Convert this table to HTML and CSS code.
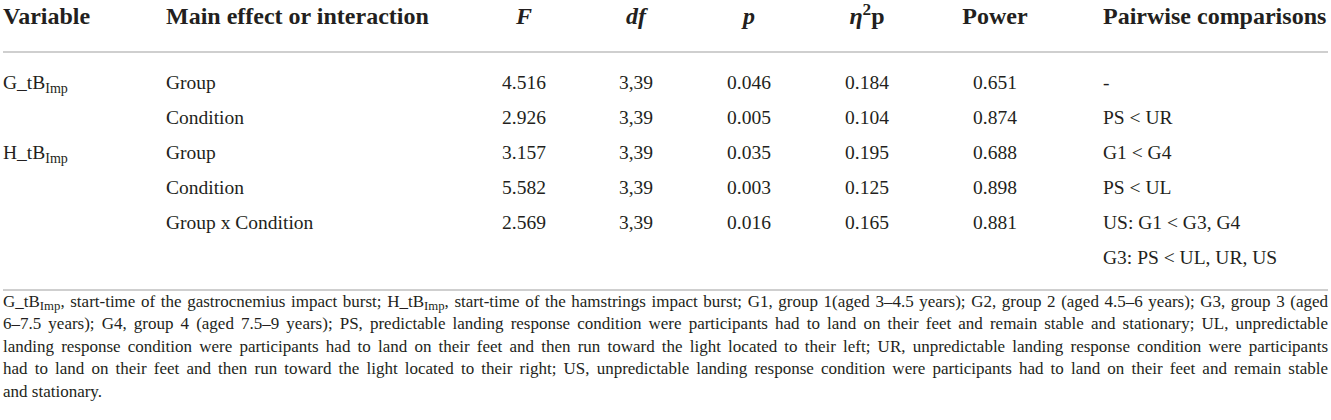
FILE: index.html
```html
<!DOCTYPE html>
<html lang="en">
<head>
    <meta charset="UTF-8">
    <title>Landing response EMG table</title>
    <link rel="stylesheet" href="styles.css">
</head>
<body>
    <table class="results">
        <colgroup>
            <col class="c-var">
            <col class="c-main">
            <col class="c-f">
            <col class="c-df">
            <col class="c-p">
            <col class="c-eta">
            <col class="c-power">
            <col class="c-pair">
        </colgroup>
        <thead>
            <tr>
                <th>Variable</th>
                <th>Main effect or interaction</th>
                <th class="num"><i>F</i></th>
                <th class="num"><i>df</i></th>
                <th class="num"><i>p</i></th>
                <th class="num"><i>&eta;</i><sup>2</sup>p</th>
                <th class="num">Power</th>
                <th class="pair">Pairwise comparisons</th>
            </tr>
        </thead>
        <tbody>
            <tr class="first">
                <td>G_tB<sub>Imp</sub></td>
                <td>Group</td>
                <td class="num">4.516</td>
                <td class="num">3,39</td>
                <td class="num">0.046</td>
                <td class="num">0.184</td>
                <td class="num">0.651</td>
                <td class="pair">-</td>
            </tr>
            <tr>
                <td></td>
                <td>Condition</td>
                <td class="num">2.926</td>
                <td class="num">3,39</td>
                <td class="num">0.005</td>
                <td class="num">0.104</td>
                <td class="num">0.874</td>
                <td class="pair">PS &lt; UR</td>
            </tr>
            <tr>
                <td>H_tB<sub>Imp</sub></td>
                <td>Group</td>
                <td class="num">3.157</td>
                <td class="num">3,39</td>
                <td class="num">0.035</td>
                <td class="num">0.195</td>
                <td class="num">0.688</td>
                <td class="pair">G1 &lt; G4</td>
            </tr>
            <tr>
                <td></td>
                <td>Condition</td>
                <td class="num">5.582</td>
                <td class="num">3,39</td>
                <td class="num">0.003</td>
                <td class="num">0.125</td>
                <td class="num">0.898</td>
                <td class="pair">PS &lt; UL</td>
            </tr>
            <tr>
                <td></td>
                <td>Group x Condition</td>
                <td class="num">2.569</td>
                <td class="num">3,39</td>
                <td class="num">0.016</td>
                <td class="num">0.165</td>
                <td class="num">0.881</td>
                <td class="pair">US: G1 &lt; G3, G4</td>
            </tr>
            <tr class="last">
                <td></td>
                <td></td>
                <td></td>
                <td></td>
                <td></td>
                <td></td>
                <td></td>
                <td class="pair">G3: PS &lt; UL, UR, US</td>
            </tr>
        </tbody>
    </table>

    <p class="note">
        <span class="line">G_tB<sub>Imp</sub>, start-time of the gastrocnemius impact burst; H_tB<sub>Imp</sub>, start-time of the hamstrings impact burst; G1, group 1(aged 3&ndash;4.5 years); G2, group 2 (aged 4.5&ndash;6 years); G3, group 3 (aged</span>
        <span class="line">6&ndash;7.5 years); G4, group 4 (aged 7.5&ndash;9 years); PS, predictable landing response condition were participants had to land on their feet and remain stable and stationary; UL, unpredictable</span>
        <span class="line">landing response condition were participants had to land on their feet and then run toward the light located to their left; UR, unpredictable landing response condition were participants</span>
        <span class="line">had to land on their feet and then run toward the light located to their right; US, unpredictable landing response condition were participants had to land on their feet and remain stable</span>
        <span class="line end">and stationary.</span>
    </p>
</body>
</html>
```

FILE: styles.css
```css
body {
    margin: 0;
    padding: 0 3px;
    background-color: #fff;
    color: #231f20;
    font-family: "Liberation Serif", "Times New Roman", serif;
}
.results {
    width: 100%;
    border-collapse: collapse;
    table-layout: fixed;
}
.c-var { width: 163px; }
.c-main { width: 304px; }
.c-f { width: 108px; }
.c-df { width: 116px; }
.c-p { width: 110px; }
.c-eta { width: 126px; }
.c-power { width: 130px; }
th {
    font-size: 24px;
    font-weight: bold;
    text-align: left;
    padding: 3px 0 21px;
    border-bottom: 2px solid #cfcfcf;
    white-space: nowrap;
}
td {
    font-size: 19.5px;
    padding: 0;
    height: 35px;
    white-space: nowrap;
}
.num {
    text-align: center;
}
.pair {
    padding-left: 43px;
}
tr.first td {
    padding-top: 12px;
}
tr.last td {
    padding-bottom: 14px;
    border-bottom: 2px solid #cfcfcf;
}
sub {
    font-size: 0.72em;
    vertical-align: -4px;
    line-height: 0;
}
sup {
    font-size: 0.72em;
    vertical-align: 9px;
    line-height: 0;
}
.note {
    margin: 0;
    font-size: 17px;
    line-height: 22.4px;
}
.line {
    display: block;
    text-align: justify;
    text-align-last: justify;
    white-space: nowrap;
}
.line.end {
    text-align-last: left;
}
.note sub {
    font-size: 0.75em;
    vertical-align: -3px;
}
```
